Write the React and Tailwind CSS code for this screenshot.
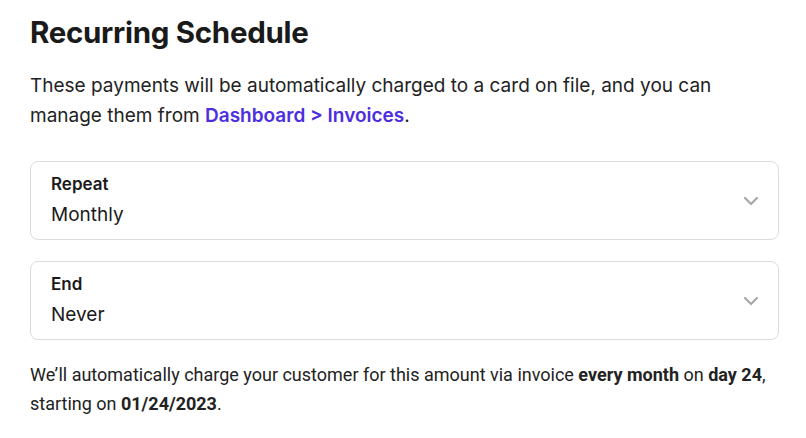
import React from "react";

const Chevron = () => (
    <svg width="16" height="10" viewBox="0 0 16 10" fill="none" className="shrink-0">
        <path d="M2 2l6 6 6-6" stroke="#a8a8a8" strokeWidth="2.2" strokeLinecap="round" strokeLinejoin="round" />
    </svg>
);

const SelectField = ({ label, value }) => (
    <div className="flex items-center justify-between h-[79px] border border-[#dcdcdc] rounded-[8px] pl-[20px] pr-[19px] bg-white">
        <div className="flex flex-col">
            <span className="text-[17px] leading-[22px] font-semibold text-[#1a1a1a]">{label}</span>
            <span className="text-[19px] leading-[26px] mt-[7px] text-[#1a1a1a]">{value}</span>
        </div>
        <Chevron />
    </div>
);

export default function App() {
    return (
        <div className="w-[806px] h-[438px] bg-white pl-[30px] pr-[27px] pt-[13px] font-['Inter',sans-serif] text-[#1a1a1a]">
            <h1 className="text-[29.5px] leading-[38px] font-bold tracking-[-0.3px]">Recurring Schedule</h1>

            <p className="mt-[20px] text-[19px] leading-[30px] text-[#222]">
                These payments will be automatically charged to a card on file, and you can manage them from{" "}
                <a className="font-semibold text-[#4c2ee0]">Dashboard &gt; Invoices</a>.
            </p>

            <div className="mt-[30px] flex flex-col gap-[21px]">
                <SelectField label="Repeat" value="Monthly" />
                <SelectField label="End" value="Never" />
            </div>

            <p className="mt-[20px] text-[18px] leading-[29px] font-['Roboto',sans-serif] text-[#222]">
                We’ll automatically charge your customer for this amount via invoice <b className="font-bold">every month</b> on{" "}
                <b className="font-bold">day 24</b>, starting on <b className="font-bold">01/24/2023</b>.
            </p>
        </div>
    );
}
